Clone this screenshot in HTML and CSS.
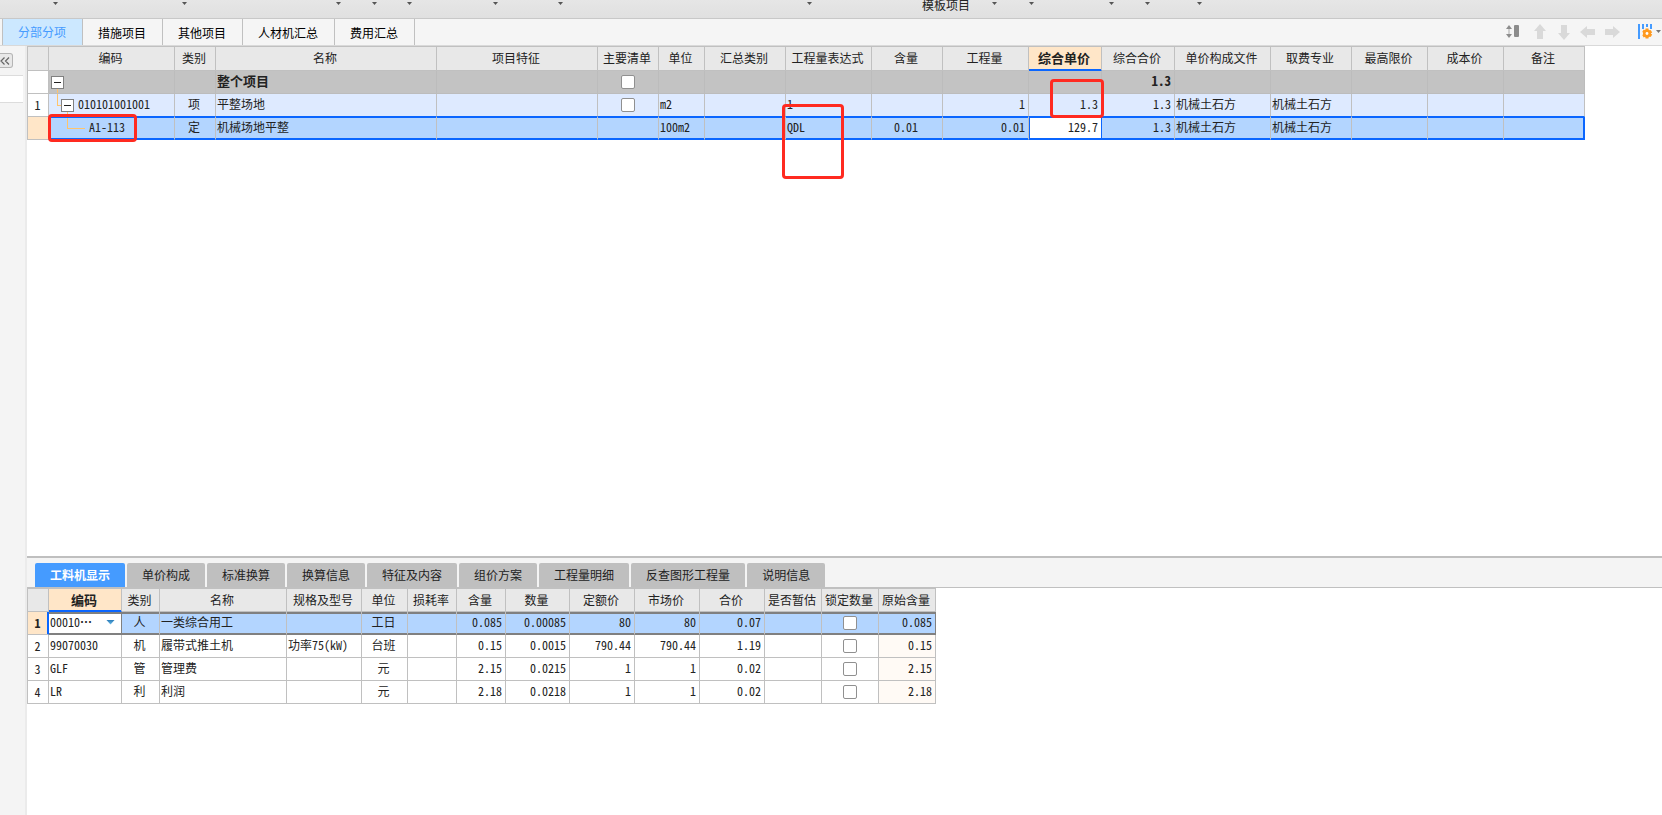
FILE: index.html
```
<!DOCTYPE html>
<html lang="zh-CN">
<head>
<meta charset="utf-8">
<title>分部分项</title>
<link rel="stylesheet" href="styles.css">
</head>
<body>
<div class="app">
  <header class="ribbon">
    <i class="caret c1"></i><i class="caret c2"></i><i class="caret c3"></i><i class="caret c4"></i><i class="caret c5"></i><i class="caret c6"></i><i class="caret c7"></i><i class="caret c8"></i>
    <span class="ribbon-label">模板项目</span>
    <i class="caret c9"></i><i class="caret c10"></i><i class="caret c11"></i><i class="caret c12"></i><i class="caret c13"></i>
  </header>
  <nav class="main-tabs">
    <button class="main-tab active">分部分项</button>
    <button class="main-tab">措施项目</button>
    <button class="main-tab">其他项目</button>
    <button class="main-tab">人材机汇总</button>
    <button class="main-tab">费用汇总</button>
    <div class="tools">
      <button class="tool height" aria-label="行高"><svg width="18" height="16" viewBox="0 0 18 16"><path d="M0 5h6L3 1zM0 10h6l-3 4z" fill="#8c8c8c"/><path d="M3 5v5" stroke="#d0d0d0" stroke-width="2"/><rect x="8" y="1" width="5" height="12" rx="1" fill="#8c8c8c"/></svg></button>
      <button class="tool" aria-label="上移"><svg width="16" height="16" viewBox="0 0 16 16"><path d="M8 0l6 7h-3v8H5V7H2z" fill="#d9d9d9"/></svg></button>
      <button class="tool" aria-label="下移"><svg width="16" height="16" viewBox="0 0 16 16"><path d="M8 16l6-7h-3V1H5v8H2z" fill="#d9d9d9"/></svg></button>
      <button class="tool" aria-label="左移"><svg width="16" height="16" viewBox="0 0 16 16"><path d="M0 8l7-6v3h8v6H7v-0v3z" fill="#d9d9d9"/></svg></button>
      <button class="tool" aria-label="右移"><svg width="16" height="16" viewBox="0 0 16 16"><path d="M16 8L9 2v3H1v6h8v3z" fill="#d9d9d9"/></svg></button>
      <button class="tool config" aria-label="设置"><svg width="24" height="16" viewBox="0 0 24 16"><path d="M1 0v15M5 0v5M9 0v3M13 0v5" stroke="#459bff" stroke-width="2"/><g fill="#ff9a1f"><circle cx="9" cy="9.500" r="4"/><path d="M7.500 4.500h3v10h-3zM4.200 8l1.500-2.500 8.500 5-1.500 2.500zM4.200 11l1.500 2.500 8.500-5L12.700 6z"/></g><circle cx="9" cy="9.500" r="1.400" fill="#fff"/><path d="M18 6h5l-2.500 3z" fill="#777"/></svg></button>
    </div>
  </nav>
  <div class="body">
    <aside class="side">
      <button class="collapse" aria-label="展开"><svg width="10" height="10" viewBox="0 0 10 10"><path d="M4.500 1.500L1 5l3.500 3.500M9 1.500L5.500 5 9 8.500" fill="none" stroke="#666" stroke-width="1.200"/></svg></button>
      <div class="side-item"></div>
    </aside>
    <main class="content">
      <section class="upper">
        <table class="grid main-grid">
          <colgroup><col class="w21"><col class="w126"><col class="w41"><col class="w221"><col class="w161"><col class="w61"><col class="w46"><col class="w81"><col class="w86"><col class="w71"><col class="w86"><col class="w73"><col class="w73"><col class="w96"><col class="w81"><col class="w76"><col class="w76"><col class="w81"></colgroup>
          <thead><tr><th></th><th>编码</th><th>类别</th><th>名称</th><th>项目特征</th><th>主要清单</th><th>单位</th><th>汇总类别</th><th>工程量表达式</th><th>含量</th><th>工程量</th><th class="current">综合单价</th><th>综合合价</th><th>单价构成文件</th><th>取费专业</th><th>最高限价</th><th>成本价</th><th>备注</th></tr></thead>
          <tbody>
            <tr class="total"><td class="idx"></td><td class="node"><div class="tree root"><button class="toggle" aria-label="折叠"></button></div></td><td></td><td>整个项目</td><td></td><td class="check"><input type="checkbox" aria-label="主要清单"></td><td></td><td></td><td></td><td></td><td></td><td></td><td class="r">1.3</td><td></td><td></td><td></td><td></td><td></td></tr>
            <tr class="item"><td class="idx">1</td><td class="node"><div class="tree child"><button class="toggle" aria-label="折叠"></button><span class="code">010101001001</span></div></td><td class="c">项</td><td>平整场地</td><td></td><td class="check"><input type="checkbox" aria-label="主要清单"></td><td>m2</td><td></td><td>1</td><td></td><td class="r">1</td><td class="r">1.3</td><td class="r">1.3</td><td>机械土石方</td><td>机械土石方</td><td></td><td></td><td></td></tr>
            <tr class="selected"><td class="idx"></td><td class="node"><div class="tree leaf"><span class="code">A1-113</span></div></td><td class="c">定</td><td>机械场地平整</td><td></td><td></td><td>100m2</td><td></td><td>QDL</td><td class="c">0.01</td><td class="r">0.01</td><td class="r editing">129.7</td><td class="r">1.3</td><td>机械土石方</td><td>机械土石方</td><td></td><td></td><td></td></tr>
          </tbody>
        </table>
        <div class="mark mark-code"></div>
        <div class="mark mark-price"></div>
        <div class="mark mark-expr"></div>
      </section>
      <section class="lower">
        <nav class="sub-tabs">
          <button class="sub-tab active">工料机显示</button><button class="sub-tab">单价构成</button><button class="sub-tab">标准换算</button><button class="sub-tab">换算信息</button><button class="sub-tab">特征及内容</button><button class="sub-tab">组价方案</button><button class="sub-tab">工程量明细</button><button class="sub-tab">反查图形工程量</button><button class="sub-tab">说明信息</button>
        </nav>
        <table class="grid detail-grid">
          <colgroup><col class="w21"><col class="w73"><col class="w38"><col class="w127"><col class="w75"><col class="w46"><col class="w49"><col class="w49"><col class="w64"><col class="w65"><col class="w65"><col class="w65"><col class="w57"><col class="w57"><col class="w57"></colgroup>
          <thead><tr><th></th><th class="current">编码</th><th>类别</th><th>名称</th><th>规格及型号</th><th>单位</th><th>损耗率</th><th>含量</th><th>数量</th><th>定额价</th><th>市场价</th><th>合价</th><th>是否暂估</th><th>锁定数量</th><th>原始含量</th></tr></thead>
          <tbody>
            <tr class="picked"><td class="idx">1</td><td class="combo"><button class="picker"><span>00010<span class="dots">⋯</span></span><i class="drop"></i></button></td><td class="c">人</td><td>一类综合用工</td><td></td><td class="c">工日</td><td></td><td class="r">0.085</td><td class="r">0.00085</td><td class="r">80</td><td class="r">80</td><td class="r">0.07</td><td></td><td class="check"><input type="checkbox" aria-label="锁定数量"></td><td class="r origin">0.085</td></tr>
            <tr><td class="idx">2</td><td>99070030</td><td class="c">机</td><td>履带式推土机</td><td>功率75(kW)</td><td class="c">台班</td><td></td><td class="r">0.15</td><td class="r">0.0015</td><td class="r">790.44</td><td class="r">790.44</td><td class="r">1.19</td><td></td><td class="check"><input type="checkbox" aria-label="锁定数量"></td><td class="r origin">0.15</td></tr>
            <tr><td class="idx">3</td><td>GLF</td><td class="c">管</td><td>管理费</td><td></td><td class="c">元</td><td></td><td class="r">2.15</td><td class="r">0.0215</td><td class="r">1</td><td class="r">1</td><td class="r">0.02</td><td></td><td class="check"><input type="checkbox" aria-label="锁定数量"></td><td class="r origin">2.15</td></tr>
            <tr><td class="idx">4</td><td>LR</td><td class="c">利</td><td>利润</td><td></td><td class="c">元</td><td></td><td class="r">2.18</td><td class="r">0.0218</td><td class="r">1</td><td class="r">1</td><td class="r">0.02</td><td></td><td class="check"><input type="checkbox" aria-label="锁定数量"></td><td class="r origin">2.18</td></tr>
          </tbody>
        </table>
      </section>
    </main>
  </div>
</div>
</body>
</html>
```
FILE: styles.css
```
* { box-sizing: border-box; }
body {
  margin: 0;
  background: #fff;
  color: #222;
  font: 12px/16px "Noto Sans CJK SC", sans-serif;
}
button { font: inherit; color: inherit; border: 0; padding: 0; margin: 0; background: none; }
.app { display: flex; flex-direction: column; height: 100vh; overflow: hidden; }

.ribbon {
  position: relative;
  flex: none;
  height: 19px;
  background: linear-gradient(#e6e6e6, #e0e0e0);
  border-bottom: 1px solid #c8c8c8;
}
.caret {
  position: absolute;
  top: 2px;
  width: 5px;
  height: 3px;
  background: #555;
  clip-path: polygon(0 0, 100% 0, 50% 100%);
}
.c1 { left: 53px; } .c2 { left: 182px; } .c3 { left: 336px; } .c4 { left: 372px; }
.c5 { left: 407px; } .c6 { left: 493px; } .c7 { left: 558px; } .c8 { left: 807px; }
.c9 { left: 992px; } .c10 { left: 1029px; } .c11 { left: 1109px; } .c12 { left: 1145px; } .c13 { left: 1197px; }
.ribbon-label { position: absolute; left: 922px; top: 0; line-height: 9px; }

.main-tabs {
  flex: none;
  display: flex;
  height: 27px;
  padding-left: 2px;
  background: #f5f5f5;
  border-bottom: 1px solid #d9d9d9;
}
.main-tab { padding: 2px 16px 0 15px; border-right: 1px solid #c0c0c0; color: #000; }
.main-tab.active { border-left: 1px solid #c0c0c0; background: #cce8ff; color: #459bff; padding-top: 0; }
.tools { margin-left: auto; display: flex; align-items: center; gap: 8px; }
.tool { display: flex; width: 16px; }
.tool.height { width: 18px; }
.tool.config { width: 24px; margin-left: 10px; }

.body { flex: 1; display: flex; min-height: 0; }
.side { flex: none; width: 27px; padding-top: 7px; background: #f4f4f4; border-right: 2px solid #ebebeb; }
.collapse {
  display: flex;
  align-items: center;
  width: 13px;
  height: 15px;
  border: 1px solid #b5b5b5;
  border-left: 0;
  border-radius: 0 3px 3px 0;
  background: #e8e8e8;
}
.side-item { height: 28px; width: 23px; margin-top: 7px; background: #fff; border: 1px solid #dcdcdc; border-width: 1px 0; }
.content { flex: 1; min-width: 0; display: flex; flex-direction: column; }
.upper { position: relative; flex: 1; }
.lower { flex: none; height: 259px; border-top: 2px solid #bfbfbf; }

.grid {
  table-layout: fixed;
  border-collapse: separate;
  border-spacing: 0;
  border: 1px solid #c0c0c0;
  border-width: 1px 0 0 1px;
  font-feature-settings: "hwid";
}
.main-grid { width: 1558px; }
.detail-grid { width: 909px; }
.grid th, .grid td {
  height: 23px;
  padding: 0 3px 2px 1px;
  border: 1px solid #c0c0c0;
  border-width: 0 1px 1px 0;
  font-weight: 400;
  white-space: nowrap;
  overflow: hidden;
  text-align: left;
}
.main-grid th { height: 24px; }
.grid th { padding: 0 2px 2px 0; background: #e8e8e8; text-align: center; }
.detail-grid th { padding-bottom: 0; }
.grid th.current { background: #ffe6c8; border-bottom-color: #0a66ff; box-shadow: inset 0 -1px #0a66ff; font-weight: 700; font-size: 13px; }
.grid .idx { padding: 0 1px 0 0; text-align: center; background: #fff; }
.grid .c { text-align: center; }
.grid .r { text-align: right; }
.grid .check, .grid .node { padding-bottom: 0; }
.grid .check { padding: 0; }

.w21 { width: 21px; } .w38 { width: 38px; } .w41 { width: 41px; } .w46 { width: 46px; }
.w49 { width: 49px; } .w57 { width: 57px; } .w61 { width: 61px; } .w64 { width: 64px; }
.w65 { width: 65px; } .w71 { width: 71px; } .w73 { width: 73px; } .w75 { width: 75px; }
.w76 { width: 76px; } .w81 { width: 81px; } .w86 { width: 86px; } .w96 { width: 96px; }
.w126 { width: 126px; } .w127 { width: 127px; } .w161 { width: 161px; } .w221 { width: 221px; }

.grid .total td { background: #c3c3c3; border-color: #bcbcbc; font-weight: 700; font-size: 13px; }
.grid .total td.idx { background: #fff; border-color: #c0c0c0; }
.grid .item td { background: #deeaff; border-bottom-color: #0a66ff; }
.grid .item td.idx { background: #fff; border-bottom-color: #c0c0c0; }
.grid .selected td { background: #b3d5ff; border-bottom-color: #0a66ff; box-shadow: inset 0 1px #0a66ff, inset 0 -1px #0a66ff; }
.grid .selected td.idx { background: #ffe6c8; border-bottom-color: #c0c0c0; box-shadow: none; }
.grid .selected td:last-child { border-right-color: #0a66ff; box-shadow: inset -1px 1px #0a66ff, inset 0 -1px #0a66ff; }
.grid .selected td.editing { background: #fff; border-right-color: #0a66ff; box-shadow: inset 1px 1px #0a66ff, inset 0 -1px #0a66ff; }

.tree { position: relative; display: flex; align-items: center; height: 22px; padding-left: 1px; }
.tree.child { padding-left: 11px; gap: 4px; }
.tree.leaf { padding-left: 39px; }
.code { padding-bottom: 2px; }
.toggle { position: relative; width: 13px; height: 13px; border: 1px solid #808080; background: #fff; }
.toggle::after { content: ""; position: absolute; left: 2px; top: 5px; width: 7px; height: 1px; background: #222; }
.tree.root::after { content: ""; position: absolute; left: 7px; top: 18px; height: 4px; border-left: 1px solid #ffc46b; }
.tree.child::before { content: ""; position: absolute; left: 7px; top: 0; width: 4px; height: 11px; border: 1px solid #ffc46b; border-width: 0 0 1px 1px; }
.tree.child::after { content: ""; position: absolute; left: 17px; top: 18px; height: 4px; border-left: 1px solid #ffc46b; }
.tree.leaf::before { content: ""; position: absolute; left: 17px; top: 1px; width: 17px; height: 10px; border: 1px solid #ffc46b; border-width: 0 0 1px 1px; }

input[type="checkbox"] {
  appearance: none;
  display: block;
  width: 14px;
  height: 14px;
  margin: 0 auto;
  border: 1px solid #909090;
  border-radius: 2px;
  background: #fff;
}

.mark { position: absolute; border: 3px solid #ff2a20; border-radius: 4px; }
.mark-code { left: 21px; top: 68px; width: 89px; height: 28px; }
.mark-price { left: 1023px; top: 33px; width: 54px; height: 39px; }
.mark-expr { left: 755px; top: 58px; width: 62px; height: 75px; }

.sub-tabs { display: flex; gap: 2px; height: 30px; padding: 5px 0 0 8px; background: #f4f4f4; border-bottom: 1px solid #c0c0c0; }
.sub-tab { padding: 0 15px; background: #bfbfbf; border-radius: 2px 2px 0 0; white-space: nowrap; }
.sub-tab.active { background: #459bff; color: #fff; font-weight: 700; }

.grid .picked td { background: #b3d5ff; border-bottom-color: #808080; box-shadow: inset 0 2px #808080, inset 0 -1px #808080; }
.grid .picked td.idx { background: #ffe6c8; border-right-color: #0a66ff; border-bottom-color: #c0c0c0; box-shadow: inset -1px 0 #0a66ff; font-weight: 700; }
.grid .picked td.combo { background: #fff; border-right-color: #808080; }
.grid .picked td.origin { border-right-color: #808080; }
.picker { display: flex; align-items: center; justify-content: space-between; width: 100%; padding-right: 3px; font-feature-settings: "hwid"; }
.dots { font-weight: 700; }
.drop { width: 9px; height: 5px; background: linear-gradient(#2b7cb8, #6fc0ee); clip-path: polygon(0 0, 100% 0, 50% 100%); }
.origin { background: #fffaf5; }
```
